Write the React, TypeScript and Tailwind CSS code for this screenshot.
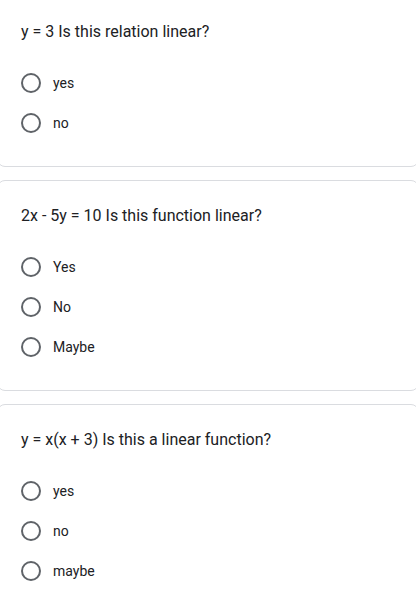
const QUESTIONS = [
  { title: "y = 3 Is this relation linear?", options: ["yes", "no"] },
  { title: "2x - 5y = 10 Is this function linear?", options: ["Yes", "No", "Maybe"] },
  { title: "y = x(x + 3) Is this a linear function?", options: ["yes", "no", "maybe"] },
];

function Radio() {
  return <span className="h-5 w-5 shrink-0 rounded-full border-2 border-[#5f6368]" />;
}

export default function App() {
  return (
    <div
      className="h-[606px] w-[416px] overflow-hidden bg-white"
      style={{ fontFamily: "Roboto, 'Liberation Sans', sans-serif" }}
    >
      <div className="-mx-[3px] mt-[-4px] flex flex-col gap-[13px]">
        {QUESTIONS.map((q) => (
          <div
            key={q.title}
            className="rounded-lg border border-[#dadce0] bg-white pb-[23px] pl-[23px] pr-6 pt-[23px]"
          >
            <div className="text-base leading-6 text-[#202124]">{q.title}</div>
            <div className="mt-[19px] flex flex-col">
              {q.options.map((opt) => (
                <div key={opt} className="flex h-10 items-center">
                  <Radio />
                  <span className="ml-3 text-sm text-[#202124]">{opt}</span>
                </div>
              ))}
            </div>
          </div>
        ))}
      </div>
    </div>
  );
}
